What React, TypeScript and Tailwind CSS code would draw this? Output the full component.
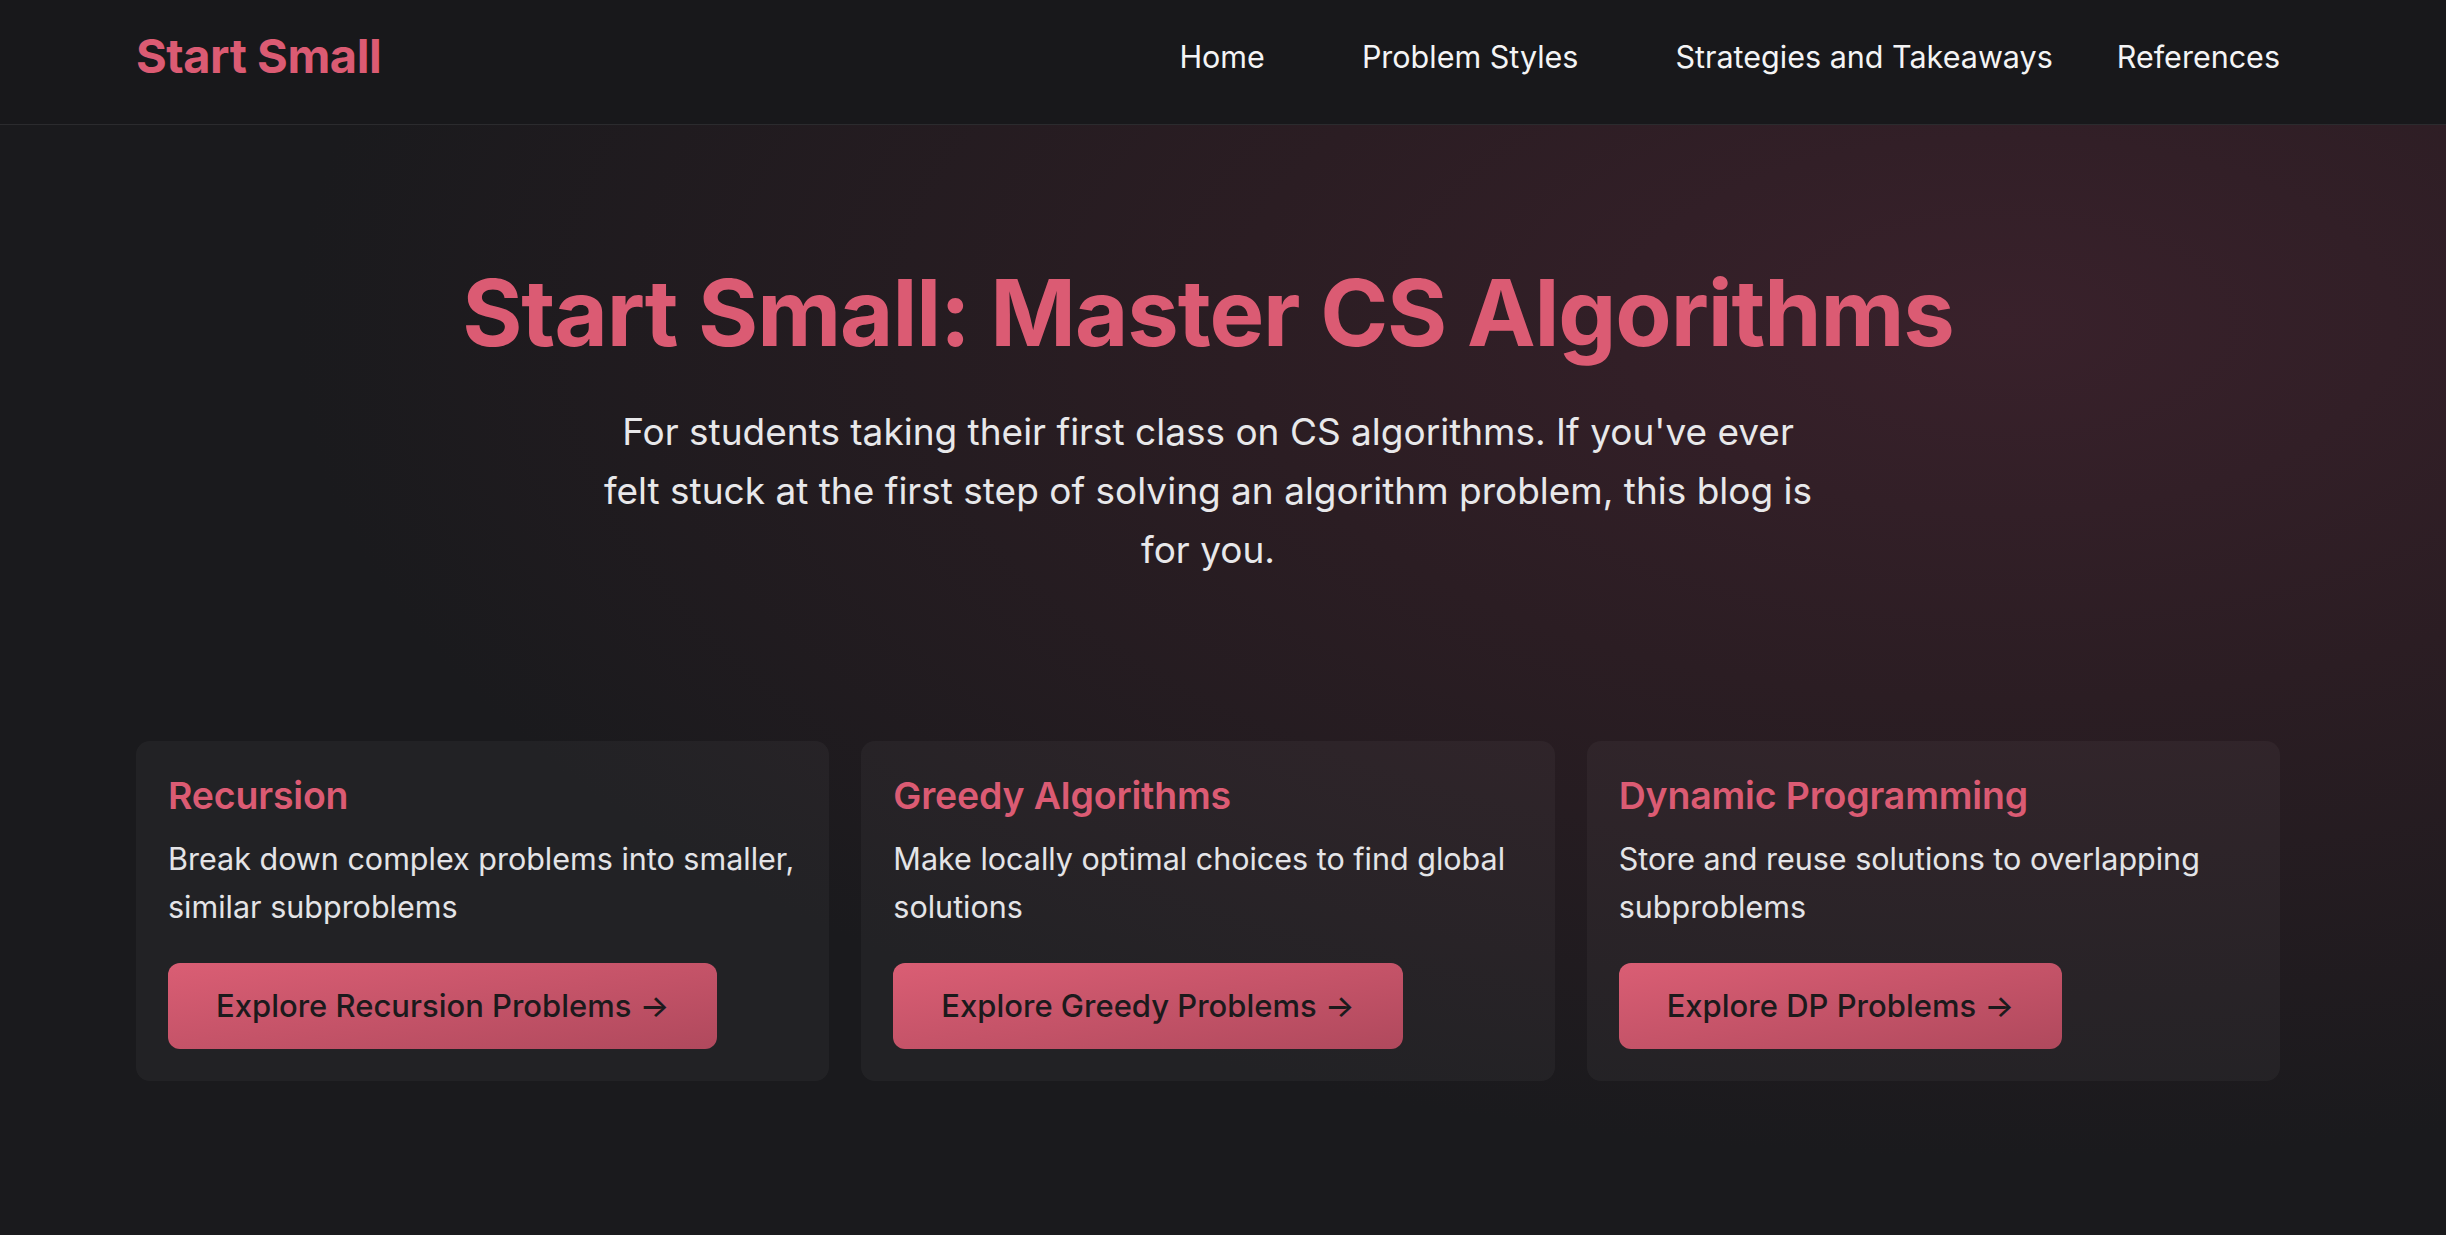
import React from 'react';

const topics = [
  {
    title: 'Recursion',
    desc: 'Break down complex problems into smaller, similar subproblems',
    cta: 'Explore Recursion Problems →',
  },
  {
    title: 'Greedy Algorithms',
    desc: 'Make locally optimal choices to find global solutions',
    cta: 'Explore Greedy Problems →',
  },
  {
    title: 'Dynamic Programming',
    desc: 'Store and reuse solutions to overlapping subproblems',
    cta: 'Explore DP Problems →',
  },
];

const Header: React.FC = () => (
  <header className="h-[125px] bg-[#18181b] border-b border-[#2b2b2e]">
    <div className="ml-[136px] w-[2144px] h-full pb-[11px] flex items-center justify-between">
      <a className="text-[47px] font-bold text-[#db5b73] tracking-[-0.01em]">Start Small</a>
      <nav className="flex items-center text-[30.5px] text-[#f4f4f5]">
        <a>Home</a>
        <a className="ml-[97px]">Problem Styles</a>
        <a className="ml-[97px]">Strategies and Takeaways</a>
        <a className="ml-[64px]">References</a>
      </nav>
    </div>
  </header>
);

const TopicCard: React.FC<(typeof topics)[number]> = ({ title, desc, cta }) => (
  <div className="rounded-[14px] bg-white/[0.04] p-8 flex flex-col items-start">
    <h3 className="text-[37.5px] leading-[1.2] font-semibold text-[#db5b73] tracking-[-0.005em]">{title}</h3>
    <p className="mt-[17px] text-[30.5px] leading-[48px] text-[#e4e4e7]">{desc}</p>
    <button className="mt-8 h-[86px] px-12 rounded-[12px] bg-gradient-to-br from-[#da5e74] to-[#b0495d] text-[31px] font-medium text-[#1c1a1c]">
      {cta}
    </button>
  </div>
);

export default function App() {
  return (
    <div
      className="min-h-[1235px] bg-[#1a1a1d] text-white"
      style={{ fontFamily: 'Inter, "Noto Sans", sans-serif' }}
    >
      <Header />
      <main className="min-h-[1110px] bg-[radial-gradient(ellipse_70%_75%_at_82%_18%,#39212b_0%,#2b1d23_45%,#1a1a1d_100%)]">
        <div className="ml-[136px] w-[2144px] pt-[133px] pb-[153px]">
          <section className="flex flex-col items-center text-center">
            <h1 className="text-[92px] leading-[1.2] font-bold text-[#db5b73] tracking-[-0.012em]">
              Start Small: Master CS Algorithms
            </h1>
            <p className="mt-[34px] max-w-[1210px] text-[37px] leading-[59px] text-[#e8e8ea]">
              For students taking their first class on CS algorithms. If you've ever felt stuck at the first step of
              solving an algorithm problem, this blog is for you.
            </p>
          </section>
          <section className="mt-[162px] grid grid-cols-3 gap-8">
            {topics.map((t) => (
              <TopicCard key={t.title} {...t} />
            ))}
          </section>
        </div>
      </main>
    </div>
  );
}
